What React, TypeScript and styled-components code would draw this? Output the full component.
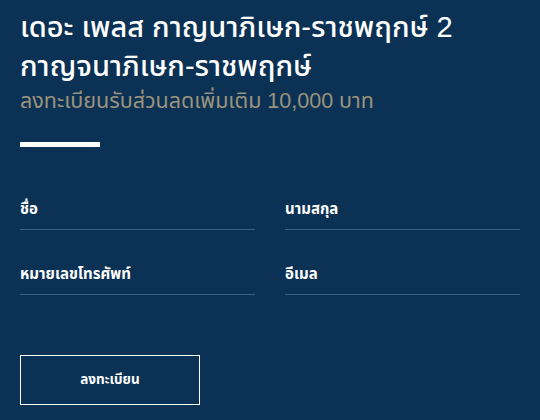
import React from "react";
import styled, { createGlobalStyle } from "styled-components";

const GlobalStyle = createGlobalStyle`
  html, body {
    margin: 0;
    padding: 0;
    background: #0b3254;
  }
  body {
    font-family: "Liberation Sans", "Noto Sans Thai", sans-serif;
  }
`;

const fields = [
  { id: "firstname", label: "ชื่อ" },
  { id: "lastname", label: "นามสกุล" },
  { id: "phone", label: "หมายเลขโทรศัพท์" },
  { id: "email", label: "อีเมล" },
];

const Page = styled.div`
  width: 540px;
  height: 420px;
  box-sizing: border-box;
  padding: 8px 20px 0;
  background: #0b3254;
  color: #fff;
  overflow: hidden;
`;

const Title = styled.h1`
  margin: 0;
  font-size: 29px;
  line-height: 39px;
  font-weight: 500;
  color: #fff;
`;

const SubTitle = styled.p`
  margin: 0;
  font-size: 21.5px;
  line-height: 30px;
  color: #9b937d;
`;

const Divider = styled.div`
  width: 80px;
  height: 5px;
  margin-top: 26px;
  background: #fff;
`;

const FieldGrid = styled.div`
  display: grid;
  grid-template-columns: 1fr 1fr;
  column-gap: 30px;
  row-gap: 20px;
  margin-top: 38px;
`;

const Field = styled.label`
  display: flex;
  align-items: flex-end;
  height: 36px;
  padding-bottom: 8px;
  border-bottom: 1px solid #3d6080;
  font-size: 15px;
  font-weight: 700;
  color: #fff;
`;

const SubmitButton = styled.button`
  display: block;
  width: 180px;
  height: 50px;
  margin-top: 60px;
  border: 1px solid #fff;
  background: transparent;
  color: #fff;
  font-family: inherit;
  font-size: 13.5px;
  font-weight: 700;
  cursor: pointer;
`;

export default function App() {
  return (
    <Page>
      <GlobalStyle />
      <Title>
        เดอะ เพลส กาญนาภิเษก-ราชพฤกษ์ 2
        <br />
        กาญจนาภิเษก-ราชพฤกษ์
      </Title>
      <SubTitle>ลงทะเบียนรับส่วนลดเพิ่มเติม 10,000 บาท</SubTitle>
      <Divider />
      <FieldGrid>
        {fields.map((f) => (
          <Field key={f.id}>{f.label}</Field>
        ))}
      </FieldGrid>
      <SubmitButton>ลงทะเบียน</SubmitButton>
    </Page>
  );
}
